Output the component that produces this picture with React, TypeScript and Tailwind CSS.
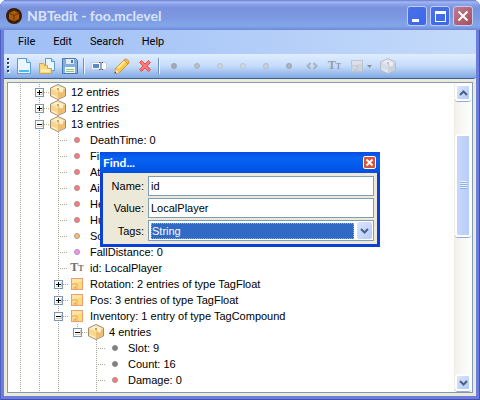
import React, { useState } from "react";

type IconName = "box" | "note" | "text" | "red" | "orange" | "pink" | "gray";

type Cell = "blank" | "line" | "branch" | "plus" | "minus" | "minusLast";

interface TreeRow {
  cells: Cell[];
  icon: IconName;
  label: string;
}

const rows: TreeRow[] = [
  { cells: ["line", "plus"], icon: "box", label: "12 entries" },
  { cells: ["line", "plus"], icon: "box", label: "12 entries" },
  { cells: ["line", "minus"], icon: "box", label: "13 entries" },
  { cells: ["line", "line", "branch"], icon: "red", label: "DeathTime: 0" },
  { cells: ["line", "line", "branch"], icon: "red", label: "Fire: 20" },
  { cells: ["line", "line", "branch"], icon: "red", label: "AttackTime: 0" },
  { cells: ["line", "line", "branch"], icon: "red", label: "Air: 300" },
  { cells: ["line", "line", "branch"], icon: "red", label: "Health: 20" },
  { cells: ["line", "line", "branch"], icon: "red", label: "HurtTime: 0" },
  { cells: ["line", "line", "branch"], icon: "orange", label: "Score: 0" },
  { cells: ["line", "line", "branch"], icon: "pink", label: "FallDistance: 0" },
  { cells: ["line", "line", "branch"], icon: "text", label: "id: LocalPlayer" },
  { cells: ["line", "line", "plus"], icon: "note", label: "Rotation: 2 entries of type TagFloat" },
  { cells: ["line", "line", "plus"], icon: "note", label: "Pos: 3 entries of type TagFloat" },
  { cells: ["line", "line", "minus"], icon: "note", label: "Inventory: 1 entry of type TagCompound" },
  { cells: ["line", "line", "line", "minusLast"], icon: "box", label: "4 entries" },
  { cells: ["line", "line", "line", "blank", "branch"], icon: "gray", label: "Slot: 9" },
  { cells: ["line", "line", "line", "blank", "branch"], icon: "gray", label: "Count: 16" },
  { cells: ["line", "line", "line", "blank", "branch"], icon: "red", label: "Damage: 0" },
];

const tailCells: Cell[] = ["line", "line", "line", "blank", "line"];

const dotColors: Record<string, [string, string]> = {
  red: ["#ff7878", "#b08e8e"],
  orange: ["#ffbc74", "#b09a84"],
  pink: ["#f890f8", "#b090b0"],
  gray: ["#808080", "#868686"],
};

function Dot({ fill, stroke }: { fill: string; stroke: string }) {
  return (
    <svg className="size-4" viewBox="0 0 16 16" aria-hidden="true">
      <circle cx="8" cy="8" r="2.5" fill={fill} stroke={stroke} />
    </svg>
  );
}

function BoxIcon({ faded = false }: { faded?: boolean }) {
  const c = faded
    ? { edge: "#b4bcc8", top: "#dfe4ec", left: "#d6dce5", right: "#cbd2dc", tape: "#eef2f7", shade: "#b8c0cc" }
    : { edge: "#9c8c74", top: "#fdeab8", left: "#fbd68a", right: "#eebf70", tape: "#fff6d8", shade: "#d8a050" };
  return (
    <svg className="size-4" viewBox="0 0 16 16" aria-hidden="true">
      <path d="M8 .5 15.5 4v8L8 15.5.5 12V4z" fill={c.top} stroke={c.edge} />
      <path d="M1 4.500 8 8v7L1 11.800z" fill={c.left} />
      <path d="M15 4.500 8 8v7l7-3.200z" fill={c.right} />
      <path d="M4 3.200 6.200 2.200 12.600 5.200v2.400l-2.200 1V6.200z" fill={c.tape} />
      <path d="M7 4h2v3L7 6z" fill={c.shade} />
      <path d="M10.400 6.200 12.600 5.200v2.400l-2.200 1z" fill={c.tape} />
      <path d="M2 11.500 7.500 14v-1L2 10.500z" fill={c.tape} />
    </svg>
  );
}

function NoteIcon({ faded = false }: { faded?: boolean }) {
  const c = faded
    ? { edge: "#bdc4cf", fill: "#cdd4de", light: "#dbe1ea" }
    : { edge: "#ee9c70", fill: "#fbdc74", light: "#fde6a4" };
  return (
    <svg className="size-4" viewBox="0 0 16 16" aria-hidden="true">
      <rect x="2.5" y="2.5" width="11" height="11" fill={c.fill} stroke={c.edge} />
      <path d="M3 3h10v2L3 8z" fill={c.light} />
      <path d="M3 8h5v5" fill={c.light} stroke={c.edge} />
      <path d="M4 12.500 7 9.500v3z" fill={c.edge} />
    </svg>
  );
}

function TextIcon() {
  return (
    <span className="flex w-4 items-baseline justify-center font-['Liberation_Serif',serif] text-[12px] leading-4 font-bold" aria-hidden="true">
      T<span className="text-[8px]">T</span>
    </span>
  );
}

function TreeIcon({ name }: { name: IconName }) {
  if (name === "box") return <BoxIcon />;
  if (name === "note") return <NoteIcon />;
  if (name === "text") return <TextIcon />;
  const [fill, stroke] = dotColors[name];
  return <Dot fill={fill} stroke={stroke} />;
}

const vertical =
  "bg-[linear-gradient(#aca899_1px,transparent_1px)] bg-[length:1px_2px] bg-[position:9px_0px] bg-repeat-y";
const horizontal =
  "h-px flex-1 bg-[linear-gradient(to_right,#aca899_1px,transparent_1px)] bg-[length:2px_1px]";

function TreeCell({ kind }: { kind: Cell }) {
  if (kind === "blank") return <span className="h-4 w-[19px] shrink-0" />;
  if (kind === "line") return <span className={`h-4 w-[19px] shrink-0 ${vertical}`} />;
  if (kind === "branch") {
    return (
      <span className={`flex h-4 w-[19px] shrink-0 items-center pl-[9px] ${vertical}`}>
        <span className={horizontal} />
      </span>
    );
  }
  const lines =
    kind === "minusLast"
      ? "bg-[linear-gradient(#aca899_1px,transparent_1px_2px,#aca899_2px_3px,transparent_3px)] bg-[length:1px_4px] bg-[position:9px_0px] bg-no-repeat"
      : vertical;
  return (
    <span className={`flex h-4 w-[19px] shrink-0 items-center pl-[5px] ${lines}`}>
      <button type="button" aria-label={kind === "plus" ? "Expand" : "Collapse"} className="size-[9px] shrink-0">
        <svg className="size-[9px]" viewBox="0 0 9 9" shapeRendering="crispEdges" aria-hidden="true">
          <rect width="9" height="9" fill="#7898b5" />
          <rect x="1" y="1" width="7" height="7" fill="#fff" />
          <path d="M2 7h6V2H7v4H2z" fill="#d3cec0" />
          <path d={kind === "plus" ? "M2 4h5v1H2zM4 2h1v5H4z" : "M2 4h5v1H2z"} fill="#000" />
        </svg>
      </button>
      <span className={horizontal} />
    </span>
  );
}

function ToolButton({ label, disabled = false, children }: { label: string; disabled?: boolean; children: React.ReactNode }) {
  return (
    <button type="button" aria-label={label} disabled={disabled} className="flex h-5 w-[23px] shrink-0 items-center justify-center text-[#939bab]">
      {children}
    </button>
  );
}

function Separator() {
  return (
    <span className="flex h-4 w-[6px] shrink-0 justify-center">
      <span className="w-px bg-[#6a8ccb]" />
      <span className="w-px bg-[#f1f9ff]" />
    </span>
  );
}

function Chevron({ up = false }: { up?: boolean }) {
  return (
    <svg className="h-[6px] w-[9px]" viewBox="0 0 9 6" aria-hidden="true">
      <path d={up ? "M1 5 4.500 1.500 8 5" : "M1 1 4.500 4.500 8 1"} fill="none" stroke="#4d6185" strokeWidth="2" />
    </svg>
  );
}

function ScrollButton({ up = false }: { up?: boolean }) {
  return (
    <button
      type="button"
      aria-label={up ? "Scroll up" : "Scroll down"}
      className="flex h-[17px] w-full shrink-0 items-center justify-center rounded-[3px] border-2 border-white bg-linear-to-br from-[#dbe6fe] to-[#b4c9f8] shadow-[0_1px_0_#90ace0]"
    >
      <Chevron up={up} />
    </button>
  );
}

function CaptionButton({ label, close = false, children }: { label: string; close?: boolean; children: React.ReactNode }) {
  return (
    <button
      type="button"
      aria-label={label}
      className={`size-5 rounded-[3px] border border-[#c3cdf3] bg-linear-to-br ${close ? "from-[#c07a92] to-[#a54f5c]" : "from-[#4a70e4] to-[#3a66ee]"}`}
    >
      <svg className="size-[18px]" viewBox="0 0 18 18" aria-hidden="true">
        {children}
      </svg>
    </button>
  );
}

const tagTools: { label: string; fill: string; stroke: string }[] = [
  { label: "Byte", fill: "#a0a9b6", stroke: "#98a2b0" },
  { label: "Short", fill: "#b8c0cb", stroke: "#a6b0bd" },
  { label: "Int", fill: "#cdd4dc", stroke: "#b8c1cd" },
  { label: "Long", fill: "#d3d9e0", stroke: "#bac4d0" },
  { label: "Float", fill: "#cad1da", stroke: "#b0bac6" },
  { label: "Double", fill: "#adb6c2", stroke: "#98a2b0" },
];

function FindDialog() {
  const [name, setName] = useState("id");
  const [value, setValue] = useState("LocalPlayer");
  const [tag, setTag] = useState("String");
  const field = "h-5 min-w-0 border border-[#7f9db9] bg-white px-[2px] outline-none";
  return (
    <section
      role="dialog"
      aria-labelledby="find-title"
      className="absolute top-[152px] left-[100px] w-[280px] border-x-[3px] border-b-[3px] border-[#0a3fd8] bg-[#ece9d8]"
    >
      <header className="-mx-[3px] flex h-[21px] items-center justify-between bg-linear-to-b from-[#0a4be0] via-[#0664f4] via-30% to-[#0250e0] pr-1 pl-[3px]">
        <h2 id="find-title" className="font-['Lato','Open_Sans',sans-serif] text-[12px] leading-4 font-bold text-white">
          Find...
        </h2>
        <button type="button" aria-label="Close find" className="size-[13px] rounded-[2px] border border-white bg-[#dd5234]">
          <svg className="size-[11px]" viewBox="0 0 11 11" aria-hidden="true">
            <path d="m2.500 2.500 6 6m0-6-6 6" stroke="#fff" strokeWidth="2" />
          </svg>
        </button>
      </header>
      <form className="grid grid-cols-[41px_1fr] items-center gap-x-1 gap-y-[2px] py-[3px] pr-[3px]">
        <label htmlFor="find-name" className="text-right">Name:</label>
        <input id="find-name" className={field} value={name} onChange={(e) => setName(e.target.value)} />
        <label htmlFor="find-value" className="text-right">Value:</label>
        <input id="find-value" className={field} value={value} onChange={(e) => setValue(e.target.value)} />
        <label htmlFor="find-tags" className="text-right">Tags:</label>
        <div className="flex h-[21px] items-center border border-[#7f9db9] bg-white p-px">
          <select
            id="find-tags"
            value={tag}
            onChange={(e) => setTag(e.target.value)}
            className="mx-px h-[16px] min-w-0 flex-1 appearance-none border border-dotted border-[#e0a03c] bg-[#316ac5] leading-[14px] text-white outline-none"
          >
            <option>String</option>
            <option>Int</option>
            <option>Compound</option>
          </select>
          <span className="ml-[2px] flex h-full w-[15px] items-center justify-center rounded-[2px] bg-linear-to-br from-[#dbe6fe] to-[#b4c9f8]">
            <Chevron />
          </span>
        </div>
      </form>
    </section>
  );
}

export default function App() {
  return (
    <div className="h-screen bg-white font-['Liberation_Sans',Arial,sans-serif] text-[11px] leading-4 text-black">
      <main className="relative flex h-full flex-col overflow-hidden rounded-t-[7px] bg-[#6d7ddc] shadow-[inset_1px_0_0_#5060c4,inset_-1px_0_0_#4450b4,inset_0_-1px_0_#4450b4]">
        <header className="flex h-[30px] shrink-0 items-center justify-between bg-[linear-gradient(#6678d2_0,#a4baf2_2px,#8ca4e8_4px,#7a92de_8px,#7c96e0_16px,#82a6ea_26px,#6f88d8_30px)] pt-[2px] pr-[7px] pl-[6px]">
          <div className="flex items-center gap-[5px]">
            <svg className="size-4" viewBox="0 0 16 16" aria-hidden="true">
              <circle cx="8" cy="8" r="8" fill="#3a1d04" />
              <path d="M8 2.500 13 5v6l-5 2.500L3 11V5z" fill="#a85c0c" />
              <path d="M3 5l5 2.500L13 5M8 7.500v6" fill="none" stroke="#6b3504" />
            </svg>
            <h1 className="font-['Lato','Open_Sans',sans-serif] text-[14px] leading-5 font-bold text-[#d8e4f8]">NBTedit - foo.mclevel</h1>
          </div>
          <div className="flex gap-[3px]">
            <CaptionButton label="Minimize">
              <path d="M4 12h7v3H4z" fill="#fff" />
            </CaptionButton>
            <CaptionButton label="Maximize">
              <path d="M4 4h11v11H4zM5 7v7h9V7z" fill="#fff" fillRule="evenodd" />
            </CaptionButton>
            <CaptionButton label="Close" close>
              <path d="m4.500 4.500 9 9m0-9-9 9" stroke="#fff" strokeWidth="2" />
            </CaptionButton>
          </div>
        </header>

        <div className="mx-1 mb-1 flex min-h-0 flex-1 flex-col bg-[#ece9d8]">
          <nav className="flex h-6 shrink-0 items-center bg-linear-to-r from-[#9ebef5] to-[#c4dafa] pl-[5px] font-['Roboto','Open_Sans',sans-serif]">
            {["File", "Edit", "Search", "Help"].map((item) => (
              <button key={item} type="button" className="px-[9px]">
                {item}
              </button>
            ))}
          </nav>

          <div role="toolbar" aria-label="Tags" className="flex h-[25px] shrink-0 items-center rounded-br-[3px] border-b border-[#3b619c] bg-linear-to-b from-[#e0edff] via-[#c6dcfb] via-50% to-[#82a8e2]">
            <svg className="h-4 w-2 shrink-0" viewBox="0 0 8 16" shapeRendering="crispEdges" aria-hidden="true">
              {[0, 4, 8, 12].map((y) => (
                <g key={y}>
                  <rect x="4" y={y + 1} width="2" height="2" fill="#fff" />
                  <rect x="3" y={y} width="2" height="2" fill="#27417b" />
                </g>
              ))}
            </svg>
            <ToolButton label="New">
              <svg className="size-4" viewBox="0 0 16 16" aria-hidden="true">
                <path d="M1.500.500h9l4 4v11h-13z" fill="#eaf5fe" stroke="#5a9ccc" />
                <path d="M10.500.500v4h4" fill="#c8e4f8" stroke="#5a9ccc" />
                <path d="M3 12h10v2H3z" fill="#4cbcee" />
              </svg>
            </ToolButton>
            <ToolButton label="Open">
              <svg className="size-4" viewBox="0 0 16 16" aria-hidden="true">
                <path d="M6.500.500h6l3 3v9h-9z" fill="#eaf5fe" stroke="#5a9ccc" />
                <path d="M12.500.500v3h3" fill="#c8e4f8" stroke="#5a9ccc" />
                <path d="M.500 15.500v-10h4l1 2h3v3h4v5z" fill="#fbd878" stroke="#d6a04a" />
                <path d="M2 11h9v3H2z" fill="#fdebb4" />
              </svg>
            </ToolButton>
            <ToolButton label="Save">
              <svg className="size-4" viewBox="0 0 16 16" aria-hidden="true">
                <path d="M.500.500h13l2 2v13H.500z" fill="#84acdc" stroke="#4878b4" />
                <path d="M4 1h8v5H4z" fill="#e2ecf8" />
                <path d="M9 2h2v3H9z" fill="#4878b4" />
                <path d="M3 9h10v6H3z" fill="#f4f8f0" />
                <path d="M4 11h8v1H4zm0 2h8v1H4z" fill="#8cc870" />
              </svg>
            </ToolButton>
            <Separator />
            <ToolButton label="Rename">
              <svg className="size-4" viewBox="0 0 16 16" aria-hidden="true">
                <path d="M.500 4.500h15v7H.500z" fill="#f6f9fd" stroke="#c4cedb" />
                <path d="M2 6h6v4H2z" fill="#5c88c4" />
                <path d="M8 4.500h1.500m1 0H12M8 11.500h1.500m1 0H12M10 5v6" stroke="#505660" />
              </svg>
            </ToolButton>
            <ToolButton label="Edit value">
              <svg className="size-4" viewBox="0 0 16 16" aria-hidden="true">
                <path d="m1.500 10.500 9-9h2l2 2v2l-9 9-4.500 1z" fill="#fbc84c" stroke="#d09430" />
                <path d="m4 10 8-8" stroke="#fdea9c" strokeWidth="2" />
                <path d="m10 2 .8-.8h2l2 2v2L14 6z" fill="#f0b898" stroke="#d09430" />
                <path d="m1 15.500.8-4 3.200 3z" fill="#f4e2c0" />
                <path d="m.500 15.500.5-2 1.500 1.500z" fill="#403020" />
              </svg>
            </ToolButton>
            <ToolButton label="Delete">
              <svg className="size-4" viewBox="0 0 16 16" aria-hidden="true">
                <path d="M2.500 4.500l2-2L8 6l3.500-3.500 2 2L10 8l3.500 3.500-2 2L8 10l-3.500 3.500-2-2L6 8z" fill="#fb7a74" stroke="#ee4c46" />
              </svg>
            </ToolButton>
            <Separator />
            {tagTools.map((t) => (
              <ToolButton key={t.label} label={t.label} disabled>
                <Dot fill={t.fill} stroke={t.stroke} />
              </ToolButton>
            ))}
            <ToolButton label="Byte array" disabled>
              <svg className="size-4" viewBox="0 0 16 16" aria-hidden="true">
                <path d="M6.500 5 3.500 8l3 3M9.500 5l3 3-3 3" fill="none" stroke="#a8b1be" strokeWidth="2" />
              </svg>
            </ToolButton>
            <ToolButton label="String" disabled>
              <TextIcon />
            </ToolButton>
            <button type="button" aria-label="List" disabled className="flex h-5 w-[30px] shrink-0 items-center pl-[3px]">
              <NoteIcon faded />
              <svg className="ml-[2px] h-[3px] w-[5px]" viewBox="0 0 5 3" aria-hidden="true">
                <path d="M0 0h5L2.500 3z" fill="#8d8f94" />
              </svg>
            </button>
            <ToolButton label="Compound" disabled>
              <BoxIcon faded />
            </ToolButton>
          </div>

          <div className="m-[3px] flex min-h-0 flex-1 border border-[#7f9db9] bg-white">
            <ul role="tree" aria-label="Level data" className="min-w-0 flex-1 overflow-hidden pt-px pl-[3px]">
              {rows.map((row, i) => (
                <li key={i} role="treeitem" className="flex h-4 items-center whitespace-nowrap">
                  {row.cells.map((kind, j) => (
                    <TreeCell key={j} kind={kind} />
                  ))}
                  <span className="mr-1 flex w-[18px] shrink-0 justify-center text-[#707070]">
                    <TreeIcon name={row.icon} />
                  </span>
                  {row.label}
                </li>
              ))}
              <li aria-hidden="true" className="flex h-4">
                {tailCells.map((kind, j) => (
                  <TreeCell key={j} kind={kind} />
                ))}
              </li>
            </ul>
            <div className="my-px mr-px flex w-[17px] shrink-0 flex-col border-l border-[#eeede5] bg-linear-to-r from-[#f3f1ec] to-[#fefefb]">
              <ScrollButton up />
              <div className="flex flex-1 flex-col pt-[33px]">
                <div className="flex h-[103px] flex-col items-center justify-center gap-px rounded-[3px] border-2 border-white bg-linear-to-r from-[#c9d8fc] to-[#b8ccf9] shadow-[0_1px_0_#90ace0]">
                  {[0, 1, 2, 3].map((n) => (
                    <span key={n} className="h-px w-[7px] bg-[#8cb0f8] shadow-[0_-1px_0_#eef4fe]" />
                  ))}
                </div>
              </div>
              <ScrollButton />
            </div>
          </div>
        </div>

        <FindDialog />
      </main>
    </div>
  );
}
